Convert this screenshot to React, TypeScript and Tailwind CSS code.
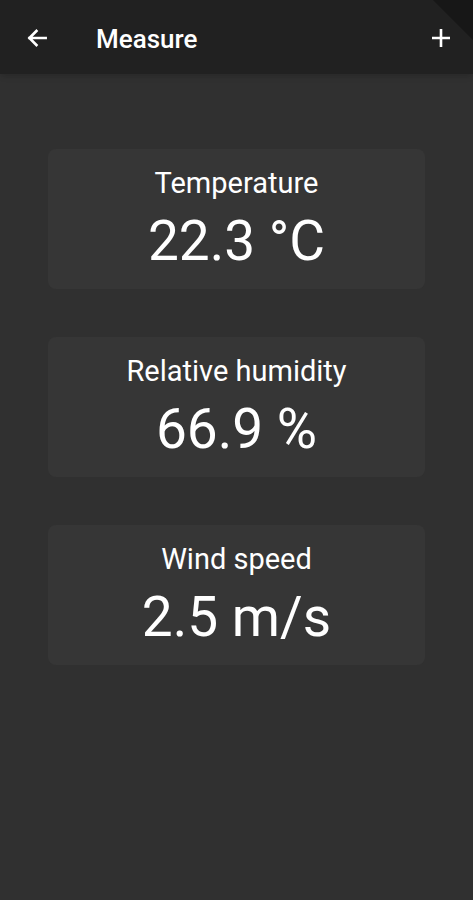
import React from 'react';

const items = [
  { label: 'Temperature', value: '22.3 °C' },
  { label: 'Relative humidity', value: '66.9 %' },
  { label: 'Wind speed', value: '2.5 m/s' },
];

export default function App() {
  return (
    <div className="relative w-[473px] h-[900px] bg-[#303030] overflow-hidden text-white" style={{ fontFamily: 'Roboto, "Noto Sans", sans-serif' }}>
      <header className="h-[74px] bg-[#212121] flex items-center pl-[24px] pr-[20px] shadow-md">
        <svg width="26" height="26" viewBox="0 0 24 24" fill="none" stroke="white" strokeWidth="2.4" strokeLinecap="square" className="mt-[2px]">
          <path d="M20 12H5M11.5 5.5L5 12l6.5 6.5" />
        </svg>
        <h1 className="ml-[46px] mt-[4px] text-[26px] font-medium">Measure</h1>
        <div className="flex-1" />
        <svg width="24" height="24" viewBox="0 0 24 24" fill="none" stroke="white" strokeWidth="2.6" className="mt-[2px]">
          <path d="M12 3v18M3 12h18" />
        </svg>
      </header>
      <div className="absolute top-0 right-0 w-0 h-0 border-t-[40px] border-t-[#171717] border-l-[40px] border-l-transparent" />
      <main className="flex flex-col gap-[48px] px-[48px] pt-[75px]">
        {items.map((it) => (
          <div key={it.label} className="h-[140px] rounded-[8px] bg-[#363636] flex flex-col items-center pt-[16px]">
            <div className="text-[29px] leading-[36px]">{it.label}</div>
            <div className="text-[55px] leading-[64px] mt-[8px]">{it.value}</div>
          </div>
        ))}
      </main>
    </div>
  );
}
